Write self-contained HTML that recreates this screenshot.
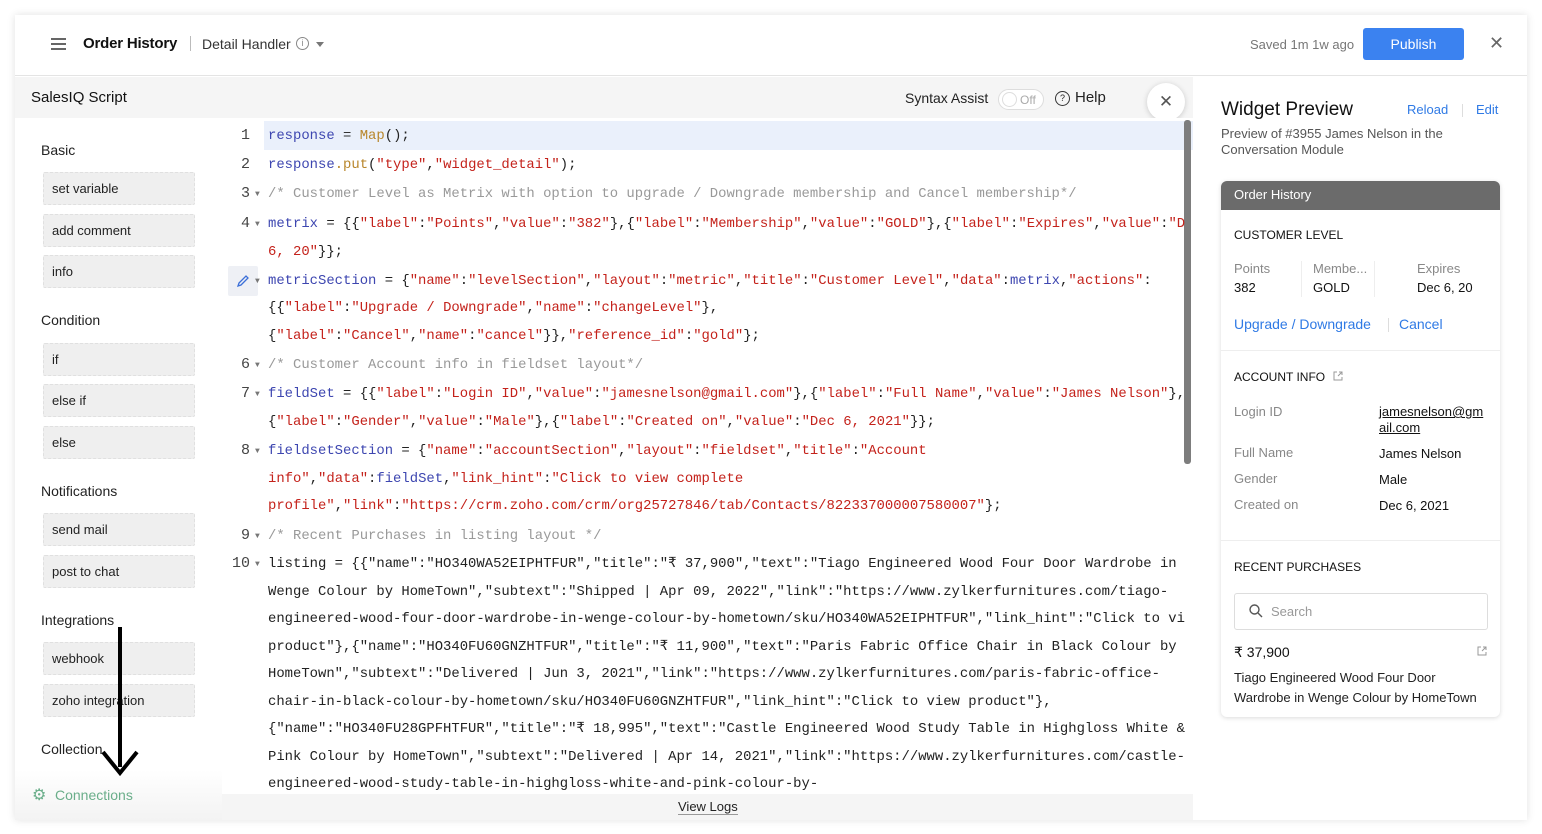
<!DOCTYPE html>
<html><head><meta charset="utf-8"><style>
*{box-sizing:border-box;margin:0;padding:0}
body{width:1542px;height:834px;background:#fff;font-family:"Liberation Sans",sans-serif;color:#222;position:relative;overflow:hidden}
.abs{position:absolute}
.frame{left:15px;top:15px;width:1512px;height:805px;background:#fff;box-shadow:0 0 8px rgba(0,0,0,.12)}
.hdr{left:15px;top:15px;width:1512px;height:61px;border-bottom:1px solid #e4e4e4;background:#fff}
.sideh{left:15px;top:77px;width:1178px;height:41px;background:#f5f5f5}
.side{left:15px;top:118px;width:207px;height:702px;background:#fff}
.sec{left:41px;font-size:14px;color:#222}
.item{left:43px;width:152px;height:33px;background:#efefef;border:1px dashed #e0e0e0;border-radius:2px;font-size:13px;padding-left:8px;line-height:31px;color:#222}
.code{left:222px;top:118px;width:971px;height:676px;background:#fff;overflow:hidden}
.row{position:absolute;left:46px;height:20px;line-height:20px;white-space:pre;color:#222}
.ln{position:absolute;left:0;width:28px;text-align:right;height:20px;line-height:20px;color:#444;font-size:15px}
.ar{position:absolute;left:33px;font-size:8px;color:#777;height:20px;line-height:22px}
.v{color:#3d46b0}.s{color:#c4221b}.c{color:#999}.f{color:#b8862b}.p{color:#333}
.right{left:1193px;top:77px;width:334px;height:743px;background:#fff}
.card{left:1221px;top:181px;width:279px;height:536px;border-radius:6px;box-shadow:0 1px 5px rgba(0,0,0,.15);background:#fff;overflow:hidden}
.lbl{color:#888;font-size:13px}
.val{color:#111;font-size:13px}
.blue{color:#2f7ae5}
</style></head><body>
<div class="abs frame"></div>
<div class="abs hdr"></div>
<div class="abs" style="left:51px;top:38px;width:15px;height:2px;background:#666;box-shadow:0 5px 0 #666,0 10px 0 #666"></div>
<div class="abs" style="left:83px;top:35px;font-size:15px;color:#111;font-weight:bold;letter-spacing:-0.2px">Order History</div>
<div class="abs" style="left:190px;top:36px;width:1px;height:15px;background:#bbb"></div>
<div class="abs" style="left:202px;top:36px;font-size:14px;color:#333">Detail Handler</div>
<div class="abs" style="left:296px;top:37px;width:13px;height:13px;border:1px solid #888;border-radius:50%;font-size:9px;text-align:center;line-height:11px;color:#888">i</div>
<div class="abs" style="left:316px;top:42px;border:4px solid transparent;border-top:5px solid #777"></div>
<div class="abs" style="left:1250px;top:37px;font-size:13px;color:#777">Saved 1m 1w ago</div>
<div class="abs" style="left:1363px;top:28px;width:101px;height:32px;background:#3b82f0;border-radius:3px;color:#fff;font-size:14px;text-align:center;line-height:32px">Publish</div>
<div class="abs" style="left:1489px;top:33px;font-size:18px;color:#666">✕</div>

<div class="abs sideh"></div>
<div class="abs" style="left:31px;top:89px;font-size:15px;color:#111">SalesIQ Script</div>
<div class="abs" style="left:905px;top:90px;font-size:14px;color:#222">Syntax Assist</div>
<div class="abs" style="left:998px;top:89px;width:46px;height:21px;border:1px solid #ddd;border-radius:11px;background:#fff"></div>
<div class="abs" style="left:1002px;top:92px;width:15px;height:15px;border:1px solid #ddd;border-radius:50%"></div>
<div class="abs" style="left:1020px;top:93px;font-size:12px;color:#aaa">Off</div>
<div class="abs" style="left:1055px;top:91px;width:15px;height:15px;border:1px solid #333;border-radius:50%;font-size:9px;text-align:center;line-height:13px">?</div>
<div class="abs" style="left:1075px;top:89px;font-size:15px;color:#222">Help</div>
<div class="abs" style="left:1147px;top:83px;width:38px;height:38px;border-radius:50%;background:#fff;box-shadow:0 1px 6px rgba(0,0,0,.18);text-align:center;line-height:38px;font-size:17px;color:#555">✕</div>

<div class="abs side"></div>
<div class="abs sec" style="top:142px">Basic</div>
<div class="abs item" style="top:172px">set variable</div>
<div class="abs item" style="top:214px">add comment</div>
<div class="abs item" style="top:255px">info</div>
<div class="abs sec" style="top:312px">Condition</div>
<div class="abs item" style="top:343px">if</div>
<div class="abs item" style="top:384px">else if</div>
<div class="abs item" style="top:426px">else</div>
<div class="abs sec" style="top:483px">Notifications</div>
<div class="abs item" style="top:513px">send mail</div>
<div class="abs item" style="top:555px">post to chat</div>
<div class="abs sec" style="top:612px">Integrations</div>
<div class="abs item" style="top:642px">webhook</div>
<div class="abs item" style="top:684px">zoho integration</div>
<div class="abs sec" style="top:741px">Collection</div>
<div class="abs" style="left:15px;top:770px;width:207px;height:50px;background:linear-gradient(#fff,#f3f3f3)"></div>
<div class="abs" style="left:32px;top:785px;font-size:16px;color:#6aae8a">⚙</div>
<div class="abs" style="left:55px;top:787px;font-size:14px;color:#6aae8a">Connections</div>
<div class="abs" style="left:118px;top:627px;width:4px;height:140px;background:#000"></div>
<svg class="abs" style="left:100px;top:745px" width="40" height="32"><path d="M3 7 L20 28 L37 7" stroke="#000" stroke-width="4" fill="none"/></svg>

<div class="abs code">
<div class="abs" style="left:42px;top:3px;width:929px;height:29px;background:#eaf0fb"></div>
<div class="abs" style="left:6px;top:148px;width:30px;height:30px;background:#eef0f5;border-radius:2px"></div>
<svg class="abs" style="left:13px;top:155px" width="16" height="16"><path d="M3 13 L4 10 L11 3 L13 5 L6 12 Z" stroke="#3b6fd8" fill="none" stroke-width="1.3"/></svg>
<div class="abs" style="left:962px;top:2px;width:7px;height:344px;background:#7d7d7d;border-radius:3px"></div>
</div>

<div class="abs" style="left:222px;top:118px;width:963px;height:676px;overflow:hidden;font-family:'Liberation Mono',monospace;font-size:13.9px">
<div class="ln" style="top:8px">1</div><div class="row" style="top:8px"><span class="v">response</span> <span class="p">=</span> <span class="f">Map</span>();</div>
<div class="ln" style="top:37px">2</div><div class="row" style="top:37px"><span class="v">response</span><span class="f">.put</span>(<span class="s">"type"</span>,<span class="s">"widget_detail"</span>);</div>
<div class="ln" style="top:66px">3</div><div class="ar" style="top:66px">▼</div><div class="row c" style="top:66px">/* Customer Level as Metrix with option to upgrade / Downgrade membership and Cancel membership*/</div>
<div class="ln" style="top:96px">4</div><div class="ar" style="top:96px">▼</div><div class="row" style="top:96px"><span class="v">metrix</span> = {{<span class="s">"label"</span>:<span class="s">"Points"</span>,<span class="s">"value"</span>:<span class="s">"382"</span>},{<span class="s">"label"</span>:<span class="s">"Membership"</span>,<span class="s">"value"</span>:<span class="s">"GOLD"</span>},{<span class="s">"label"</span>:<span class="s">"Expires"</span>,<span class="s">"value"</span>:<span class="s">"Dec</span></div>
<div class="row" style="top:124px"><span class="s">6, 20"</span>}};</div>
<div class="ar" style="top:153px">▼</div><div class="row" style="top:153px"><span class="v">metricSection</span> = {<span class="s">"name"</span>:<span class="s">"levelSection"</span>,<span class="s">"layout"</span>:<span class="s">"metric"</span>,<span class="s">"title"</span>:<span class="s">"Customer Level"</span>,<span class="s">"data"</span>:<span class="v">metrix</span>,<span class="s">"actions"</span>:</div>
<div class="row" style="top:180px">{{<span class="s">"label"</span>:<span class="s">"Upgrade / Downgrade"</span>,<span class="s">"name"</span>:<span class="s">"changeLevel"</span>},</div>
<div class="row" style="top:208px">{<span class="s">"label"</span>:<span class="s">"Cancel"</span>,<span class="s">"name"</span>:<span class="s">"cancel"</span>}},<span class="s">"reference_id"</span>:<span class="s">"gold"</span>};</div>
<div class="ln" style="top:237px">6</div><div class="ar" style="top:237px">▼</div><div class="row c" style="top:237px">/* Customer Account info in fieldset layout*/</div>
<div class="ln" style="top:266px">7</div><div class="ar" style="top:266px">▼</div><div class="row" style="top:266px"><span class="v">fieldSet</span> = {{<span class="s">"label"</span>:<span class="s">"Login ID"</span>,<span class="s">"value"</span>:<span class="s">"jamesnelson@gmail.com"</span>},{<span class="s">"label"</span>:<span class="s">"Full Name"</span>,<span class="s">"value"</span>:<span class="s">"James Nelson"</span>},</div>
<div class="row" style="top:294px">{<span class="s">"label"</span>:<span class="s">"Gender"</span>,<span class="s">"value"</span>:<span class="s">"Male"</span>},{<span class="s">"label"</span>:<span class="s">"Created on"</span>,<span class="s">"value"</span>:<span class="s">"Dec 6, 2021"</span>}};</div>
<div class="ln" style="top:323px">8</div><div class="ar" style="top:323px">▼</div><div class="row" style="top:323px"><span class="v">fieldsetSection</span> = {<span class="s">"name"</span>:<span class="s">"accountSection"</span>,<span class="s">"layout"</span>:<span class="s">"fieldset"</span>,<span class="s">"title"</span>:<span class="s">"Account</span></div>
<div class="row" style="top:351px"><span class="s">info"</span>,<span class="s">"data"</span>:<span class="v">fieldSet</span>,<span class="s">"link_hint"</span>:<span class="s">"Click to view complete</span></div>
<div class="row" style="top:378px"><span class="s">profile"</span>,<span class="s">"link"</span>:<span class="s">"https://crm.zoho.com/crm/org25727846/tab/Contacts/822337000007580007"</span>};</div>
<div class="ln" style="top:408px">9</div><div class="ar" style="top:408px">▼</div><div class="row c" style="top:408px">/* Recent Purchases in listing layout */</div>
<div class="ln" style="top:436px">10</div><div class="ar" style="top:436px">▼</div><div class="row" style="top:436px">listing = {{"name":"HO340WA52EIPHTFUR","title":"₹ 37,900","text":"Tiago Engineered Wood Four Door Wardrobe in</div>
<div class="row" style="top:464px">Wenge Colour by HomeTown","subtext":"Shipped | Apr 09, 2022","link":"https://www.zylkerfurnitures.com/tiago-</div>
<div class="row" style="top:491px">engineered-wood-four-door-wardrobe-in-wenge-colour-by-hometown/sku/HO340WA52EIPHTFUR","link_hint":"Click to view</div>
<div class="row" style="top:519px">product"},{"name":"HO340FU60GNZHTFUR","title":"₹ 11,900","text":"Paris Fabric Office Chair in Black Colour by</div>
<div class="row" style="top:546px">HomeTown","subtext":"Delivered | Jun 3, 2021","link":"https://www.zylkerfurnitures.com/paris-fabric-office-</div>
<div class="row" style="top:574px">chair-in-black-colour-by-hometown/sku/HO340FU60GNZHTFUR","link_hint":"Click to view product"},</div>
<div class="row" style="top:601px">{"name":"HO340FU28GPFHTFUR","title":"₹ 18,995","text":"Castle Engineered Wood Study Table in Highgloss White &amp;</div>
<div class="row" style="top:629px">Pink Colour by HomeTown","subtext":"Delivered | Apr 14, 2021","link":"https://www.zylkerfurnitures.com/castle-</div>
<div class="row" style="top:656px">engineered-wood-study-table-in-highgloss-white-and-pink-colour-by-</div>
</div>
<div class="abs" style="left:222px;top:794px;width:971px;height:26px;background:#f5f5f5"></div>
<div class="abs" style="left:678px;top:799px;font-size:13px;color:#222;border-bottom:1px solid #999">View Logs</div>

<div class="abs right"></div>
<div class="abs" style="left:1221px;top:99px;font-size:19px;color:#111">Widget Preview</div>
<div class="abs blue" style="left:1407px;top:102px;font-size:13px">Reload</div>
<div class="abs" style="left:1462px;top:104px;width:1px;height:13px;background:#ddd"></div>
<div class="abs blue" style="left:1476px;top:102px;font-size:13px">Edit</div>
<div class="abs" style="left:1221px;top:126px;font-size:13px;color:#555;line-height:16px;width:240px">Preview of #3955 James Nelson in the Conversation Module</div>
<div class="abs card">
 <div style="height:29px;background:#6b6b6b;color:#fff;font-size:13px;line-height:28px;padding-left:13px">Order History</div>
 <div class="abs" style="left:13px;top:47px;font-size:12px;color:#111">CUSTOMER LEVEL</div>
 <div class="abs lbl" style="left:13px;top:80px">Points</div><div class="abs val" style="left:13px;top:99px">382</div>
 <div class="abs" style="left:80px;top:80px;width:1px;height:36px;background:#eee"></div>
 <div class="abs lbl" style="left:92px;top:80px">Membe...</div><div class="abs val" style="left:92px;top:99px">GOLD</div>
 <div class="abs" style="left:153px;top:80px;width:1px;height:36px;background:#eee"></div>
 <div class="abs lbl" style="left:196px;top:80px">Expires</div><div class="abs val" style="left:196px;top:99px">Dec 6, 20</div>
 <div class="abs blue" style="left:13px;top:135px;font-size:14px">Upgrade / Downgrade</div>
 <div class="abs" style="left:167px;top:137px;width:1px;height:14px;background:#ddd"></div>
 <div class="abs blue" style="left:178px;top:135px;font-size:14px">Cancel</div>
 <div class="abs" style="left:0;top:169px;width:279px;height:1px;background:#eee"></div>
 <div class="abs" style="left:13px;top:189px;font-size:12px;color:#111">ACCOUNT INFO</div>
 <svg class="abs" style="left:111px;top:189px" width="12" height="12"><path d="M5 2 H2 V10 H10 V7 M7 2 H10 V5 M10 2 L6 6" stroke="#999" fill="none" stroke-width="1"/></svg>
 <div class="abs lbl" style="left:13px;top:223px">Login ID</div>
 <div class="abs val" style="left:158px;top:223px;line-height:16px;width:112px;text-decoration:underline">jamesnelson@gm ail.com</div>
 <div class="abs lbl" style="left:13px;top:264px">Full Name</div><div class="abs val" style="left:158px;top:265px">James Nelson</div>
 <div class="abs lbl" style="left:13px;top:290px">Gender</div><div class="abs val" style="left:158px;top:291px">Male</div>
 <div class="abs lbl" style="left:13px;top:316px">Created on</div><div class="abs val" style="left:158px;top:317px">Dec 6, 2021</div>
 <div class="abs" style="left:0;top:359px;width:279px;height:1px;background:#eee"></div>
 <div class="abs" style="left:13px;top:379px;font-size:12px;color:#111">RECENT PURCHASES</div>
 <div class="abs" style="left:13px;top:412px;width:254px;height:37px;border:1px solid #ddd;border-radius:3px"></div>
 <svg class="abs" style="left:27px;top:422px" width="16" height="16"><circle cx="6.5" cy="6.5" r="4.5" stroke="#555" stroke-width="1.4" fill="none"/><path d="M10 10 L14 14" stroke="#555" stroke-width="1.4"/></svg>
 <div class="abs" style="left:50px;top:423px;font-size:13px;color:#999">Search</div>
 <div class="abs" style="left:13px;top:463px;font-size:14px;color:#111">₹ 37,900</div>
 <svg class="abs" style="left:255px;top:464px" width="12" height="12"><path d="M5 2 H2 V10 H10 V7 M7 2 H10 V5 M10 2 L6 6" stroke="#999" fill="none" stroke-width="1"/></svg>
 <div class="abs" style="left:13px;top:487px;font-size:13px;color:#222;line-height:20px;width:260px">Tiago Engineered Wood Four Door Wardrobe in Wenge Colour by HomeTown</div>
</div>
</body></html>
